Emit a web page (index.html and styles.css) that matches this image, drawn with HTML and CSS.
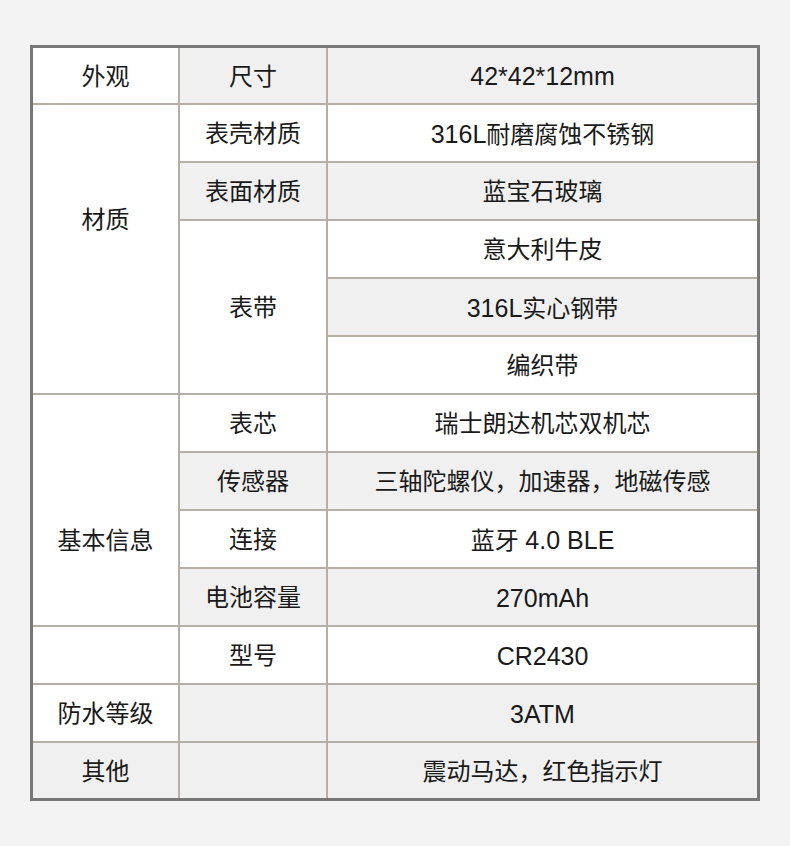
FILE: index.html
```html
<!DOCTYPE html>
<html lang="zh-CN">
<head>
<meta charset="utf-8">
<title>规格参数</title>
<link rel="stylesheet" href="styles.css">
</head>
<body>
<div class="spec">
  <div class="cell c1">外观</div>
  <div class="cell gray">尺寸</div>
  <div class="cell gray"><span class="en">42*42*12mm</span></div>

  <div class="cell c1 span5 up">材质</div>
  <div class="cell">表壳材质</div>
  <div class="cell"><span><span class="en">316L</span>耐磨腐蚀不锈钢</span></div>

  <div class="cell gray">表面材质</div>
  <div class="cell gray">蓝宝石玻璃</div>

  <div class="cell span3">表带</div>
  <div class="cell">意大利牛皮</div>

  <div class="cell gray"><span><span class="en">316L</span>实心钢带</span></div>

  <div class="cell">编织带</div>

  <div class="cell c1 span4 down">基本信息</div>
  <div class="cell">表芯</div>
  <div class="cell">瑞士朗达机芯双机芯</div>

  <div class="cell gray">传感器</div>
  <div class="cell gray">三轴陀螺仪，加速器，地磁传感</div>

  <div class="cell">连接</div>
  <div class="cell"><span>蓝牙 <span class="en">4.0 BLE</span></span></div>

  <div class="cell gray">电池容量</div>
  <div class="cell gray"><span class="en">270mAh</span></div>

  <div class="cell c1"></div>
  <div class="cell">型号</div>
  <div class="cell"><span class="en">CR2430</span></div>

  <div class="cell c1">防水等级</div>
  <div class="cell gray"></div>
  <div class="cell gray"><span class="en">3ATM</span></div>

  <div class="cell c1 gray">其他</div>
  <div class="cell gray"></div>
  <div class="cell gray">震动马达，红色指示灯</div>
</div>
</body>
</html>
```

FILE: styles.css
```css
html, body {
  margin: 0;
  padding: 0;
  background: #f3f3f3;
}

body {
  padding-top: 45px;
  font-family: "Liberation Sans", "Noto Sans CJK SC", sans-serif;
  color: #1a1a1a;
}

.spec {
  width: 724px;
  margin: 0 auto;
  border: 3px solid #777777;
  background: #b5afa5;
  display: grid;
  grid-template-columns: 145px 146px 1fr;
  grid-template-rows: 55px repeat(11, 56px) 55px;
  gap: 2px;
}

.cell {
  background: #ffffff;
  display: flex;
  align-items: center;
  justify-content: center;
  padding-top: 2px;
  font-size: 24px;
  line-height: 1;
  white-space: nowrap;
}

.cell.gray {
  background: #f0f0f0;
}

.c1 {
  grid-column: 1;
}

.span5 {
  grid-row: span 5;
}

.span4 {
  grid-row: span 4;
}

.span3 {
  grid-row: span 3;
}

.up {
  padding-top: 0;
  padding-bottom: 58px;
}

.down {
  padding-top: 62px;
}

.en {
  font-size: 25px;
}
```
